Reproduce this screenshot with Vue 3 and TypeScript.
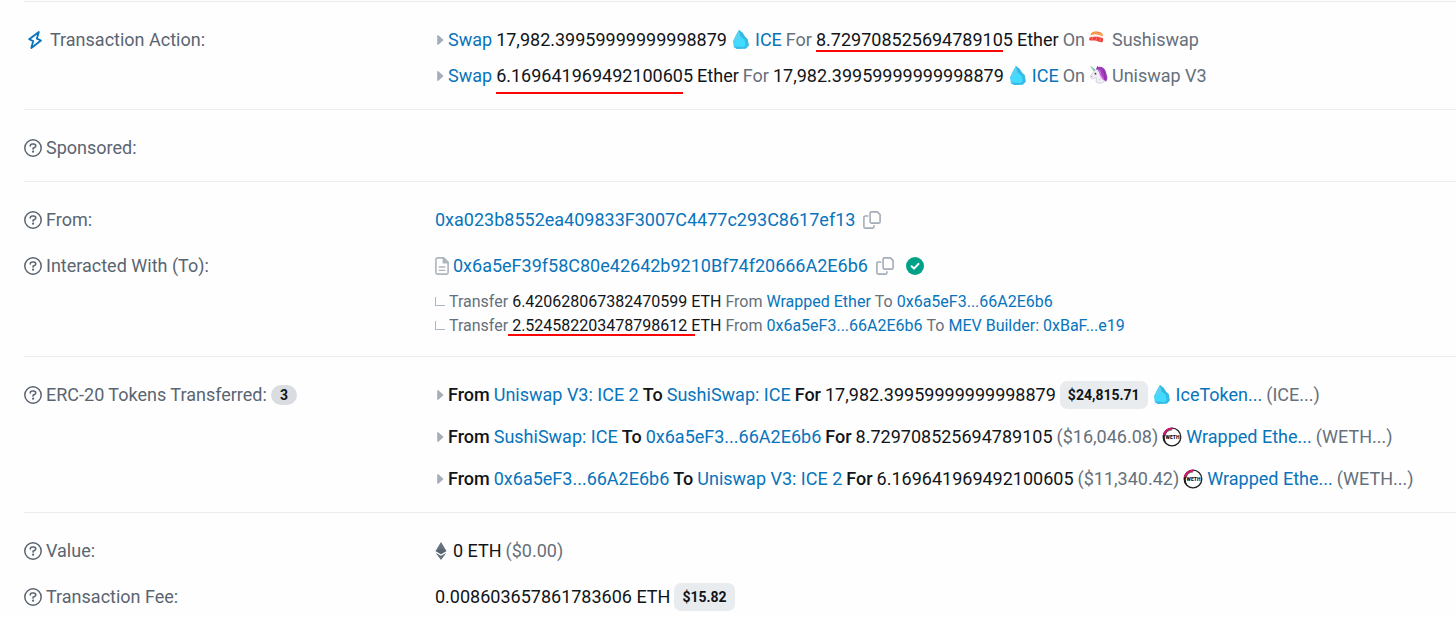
<script setup lang="ts">
interface TokenTransfer {
  from: string
  to: string
  amount: string
  fiat: string
  pill: boolean
  icon: 'ice' | 'weth'
  token: string
  symbol: string
}
interface InternalTransfer {
  amount: string
  from: string
  to: string
  marked: boolean
}

const fromAddress = '0xa023b8552ea409833F3007C4477c293C8617ef13'
const toAddress = '0x6a5eF39f58C80e42642b9210Bf74f20666A2E6b6'

const internalTransfers: InternalTransfer[] = [
  { amount: '6.420628067382470599', from: 'Wrapped Ether', to: '0x6a5eF3...66A2E6b6', marked: false },
  { amount: '2.524582203478798612', from: '0x6a5eF3...66A2E6b6', to: 'MEV Builder: 0xBaF...e19', marked: true },
]

const tokenTransfers: TokenTransfer[] = [
  {
    from: 'Uniswap V3: ICE 2', to: 'SushiSwap: ICE',
    amount: '17,982.39959999999998879', fiat: '$24,815.71', pill: true,
    icon: 'ice', token: 'IceToken...', symbol: '(ICE...)',
  },
  {
    from: 'SushiSwap: ICE', to: '0x6a5eF3...66A2E6b6',
    amount: '8.729708525694789105', fiat: '($16,046.08)', pill: false,
    icon: 'weth', token: 'Wrapped Ethe...', symbol: '(WETH...)',
  },
  {
    from: '0x6a5eF3...66A2E6b6', to: 'Uniswap V3: ICE 2',
    amount: '6.169641969492100605', fiat: '($11,340.42)', pill: false,
    icon: 'weth', token: 'Wrapped Ethe...', symbol: '(WETH...)',
  },
]

function copy(text: string) {
  navigator.clipboard?.writeText(text)
}
</script>

<template>
  <svg class="sprites" aria-hidden="true">
    <symbol id="i-help" viewBox="0 0 18 18">
      <circle cx="9" cy="9" r="8.2" fill="none" stroke="currentColor" stroke-width="1.5" />
      <path d="M6.300 7V6.800C6.300 5.700 7.200 5 8.200 5h1.500c1.200 0 2 .8 2 1.900 0 .7-.4 1.200-1 1.500L9.100 9.300v.8" fill="none" stroke="currentColor" stroke-width="1.600" stroke-linecap="round" stroke-linejoin="round" />
      <circle cx="9.100" cy="12.700" r="1.100" fill="currentColor" />
    </symbol>
    <symbol id="i-bolt" viewBox="0 0 14 18">
      <path d="M10.800 1 1.200 8.200l4 1.900-1.900 6.900L13 9.500l-4.100-1.900z" fill="none" stroke="currentColor" stroke-width="1.800" stroke-linejoin="round" />
    </symbol>
    <symbol id="i-caret" viewBox="0 0 7 10">
      <path d="M.2.800v8.400c0 .7.600.9 1.100.5l4.800-4.100c.4-.3.4-.9 0-1.200L1.300.300C.8-.1.200.100.200.800z" fill="currentColor" />
    </symbol>
    <symbol id="i-copy" viewBox="0 0 18 18">
      <path d="M8.400.9h6l2.700 2.700v7.200c0 .8-.5 1.300-1.300 1.300H8.400c-.8 0-1.300-.5-1.300-1.300V2.200C7.100 1.400 7.600.9 8.400.9zM4.800 5H2.200C1.400 5 .9 5.500.9 6.300v9.500c0 .8.500 1.300 1.300 1.300h7.400c.8 0 1.300-.5 1.300-1.300v-1" fill="none" stroke="currentColor" stroke-width="1.600" stroke-linecap="round" stroke-linejoin="round" />
    </symbol>
    <symbol id="i-doc" viewBox="0 0 14 18">
      <path d="M2.400.9h6.200l4.500 4.500v10.200c0 .9-.6 1.500-1.500 1.500H2.400c-.9 0-1.500-.6-1.500-1.500V2.400C.9 1.500 1.500.9 2.400.9z" fill="none" stroke="currentColor" stroke-width="1.600" stroke-linejoin="round" />
      <path d="M8.300.9v4.800h4.800zM4.300 10h5.500M4.300 13.400h5.500" fill="currentColor" stroke="currentColor" stroke-width="1.400" stroke-linecap="round" />
    </symbol>
    <symbol id="i-check" viewBox="0 0 18 18">
      <circle cx="9" cy="9" r="9" fill="#00a186" />
      <path d="m5.600 9.300 2.400 2.300 4.500-4.700" fill="none" stroke="#fff" stroke-width="2" stroke-linecap="round" stroke-linejoin="round" />
    </symbol>
    <symbol id="i-eth" viewBox="0 0 12 18">
      <path d="M6 0 .5 9 6 12.200 11.500 9z" fill="#66717e" />
      <path d="M.5 10.700 6 18l5.500-7.300L6 13.800z" fill="#66717e" />
      <path d="M.5 9 6 6.600 11.500 9 6 12.200z" fill="#4b5664" opacity=".5" />
    </symbol>
    <symbol id="i-ice" viewBox="0 0 16 19">
      <path d="M5.800 0 9.500 2.700 12 6.700l2.700 2.500 1 6.300-2.700 3L4 19 .8 17 0 11.500l2.300-5z" fill="#49d3fa" />
      <path d="M5.800 0 2.300 6.500 0 11.500 5.500 9.500 7.500 6.500z" fill="#5bd2f4" />
      <path d="M5.800 0 9.500 2.700 12 6.700l2.700 2.500-3 .8-4.200-3.500z" fill="#35b9df" />
      <path d="m7.500 6.500 4.200 3.500 1 5.500-2.200 1.500-8-.5-.7-4.300 3.700-2.700z" fill="#41dbff" />
      <path d="m14.700 9.200 1 6.300-2.700 3L4 19 .8 17l1.700-.5 8 .5 2.200-1.500-1-5.500z" fill="#37bde5" />
    </symbol>
    <symbol id="i-sushi" viewBox="0 0 16 12">
      <path d="M1.500 4C2.300 1.500 4 .5 7 .2c3.500-.3 6.300.8 7.800 3.300l-.3 1.800C11 3 5.500 2.500 1.500 4z" fill="#f47b20" />
      <path d="M4 2.200C7 1.300 11 1.600 14 3.600" fill="none" stroke="#fcc48e" stroke-width=".9" />
      <path d="M.8 5.300C5.500 3.400 11 4 14.800 6.300l-.2 1.200C11 5.600 5 5 .6 6.600z" fill="#fbe4df" />
      <path d="M.5 6.600C5 5 11.500 5.500 15.200 7.700l-.7 3.900c-3.300.4-5.500-1.800-8.500-1.900-2.200 0-3.800.4-5.900-.4z" fill="#f2413c" />
      <path d="M3.800 6.300 3.300 9M8.200 6.400l-.6 2.800M12.300 7.500l-.8 3" stroke="#f98b82" stroke-width=".8" />
    </symbol>
    <symbol id="i-unicorn" viewBox="0 0 19 19">
      <path d="M7.500 3.500C9.500.8 14 1.300 16 4.700c1.400 2.500 1.300 4.600 2.300 6.800.3 2-.2 3.900-1.200 5l-3.600-2.300-4-6.700z" fill="#a23cc0" />
      <path d="M12.500 3.300c2.600 1.700 3 4.500 3.300 7.200.2 1.700.7 3 .3 4.700" fill="none" stroke="#7a2e96" stroke-width=".9" />
      <path d="M6 5.200C8 3.900 10.800 4.800 11.600 7.500c.7 2.400.9 4.100 2.200 5.900l1.700 3.100c-2.500 2.200-6 2.300-8.500.3l.5-4-2.800.5c-.8 1-2.500.8-3-.5L1.400 11l3-4z" fill="#f1eef4" stroke="#b8aec4" stroke-width=".5" />
      <path d="M10 15c1.200-.2 2.100-1.200 2.300-2.700" fill="none" stroke="#c9bdd4" stroke-width=".7" />
      <path d="M1.100.800 6.200 4.600 4.900 6.200z" fill="#3fb9c9" />
      <path d="m1.100.800 2.100 1.500-.5.700z" fill="#f2b33a" />
      <path d="m3.900 2.900 1.300.9-1 1.300-.8-1.100z" fill="#e3c44c" />
      <path d="M8.700.500 9.700 4 7 4.600z" fill="#7d3b8e" />
      <path d="M9.500 5.500c1.900 1.300 1.600 3.600 2.500 5.200.8 1.300 2.200 1.800 2.300 3.400" fill="none" stroke="#c95bdd" stroke-width="1.500" stroke-linecap="round" />
      <circle cx="6.500" cy="8.700" r=".9" fill="#352b3e" />
      <circle cx="2.700" cy="11.500" r=".5" fill="#88718f" />
    </symbol>
  </svg>

  <main class="details">
    <section class="section">
      <div class="row">
        <div class="label label-action">
          <svg class="bolt"><use href="#i-bolt" /></svg>
          <span>Transaction Action:</span>
        </div>
        <ul class="lines actions">
          <li class="line">
            <svg class="caret"><use href="#i-caret" /></svg>
            <a href="#">Swap</a>
            <span>17,982.39959999999998879</span>
            <svg class="ice"><use href="#i-ice" /></svg>
            <a href="#">ICE</a>
            <span class="muted">For</span>
            <span class="marked near">8.729708525694789105</span>
            <span>Ether</span>
            <span class="muted">On</span>
            <svg class="dex"><use href="#i-sushi" width="15" height="12" y="2" /></svg>
            <span class="muted">Sushiswap</span>
          </li>
          <li class="line">
            <svg class="caret"><use href="#i-caret" /></svg>
            <a href="#">Swap</a>
            <span class="marked">6.169641969492100605</span>
            <span>Ether</span>
            <span class="muted">For</span>
            <span>17,982.39959999999998879</span>
            <svg class="ice"><use href="#i-ice" /></svg>
            <a href="#">ICE</a>
            <span class="muted">On</span>
            <svg class="dex"><use href="#i-unicorn" /></svg>
            <span class="muted">Uniswap V3</span>
          </li>
        </ul>
      </div>
    </section>

    <section class="section">
      <div class="row">
        <div class="label"><svg class="help"><use href="#i-help" /></svg><span>Sponsored:</span></div>
      </div>
    </section>

    <section class="section parties">
      <div class="row">
        <div class="label"><svg class="help"><use href="#i-help" /></svg><span>From:</span></div>
        <div class="line">
          <a href="#">{{ fromAddress }}</a>
          <button type="button" class="copy" aria-label="Copy address" @click="copy(fromAddress)">
            <svg><use href="#i-copy" /></svg>
          </button>
        </div>
      </div>
      <div class="row">
        <div class="label"><svg class="help"><use href="#i-help" /></svg><span>Interacted With (To):</span></div>
        <div>
          <div class="line">
            <svg class="doc"><use href="#i-doc" /></svg>
            <a href="#">{{ toAddress }}</a>
            <button type="button" class="copy" aria-label="Copy address" @click="copy(toAddress)">
              <svg><use href="#i-copy" /></svg>
            </button>
            <svg class="check"><use href="#i-check" /></svg>
          </div>
          <ul class="internal">
            <li v-for="t in internalTransfers" :key="t.amount" class="line small">
              <span class="elbow"></span>
              <span class="muted">Transfer</span>
              <span :class="{ marked: t.marked, tight: t.marked }">{{ t.amount }} ETH</span>
              <span class="muted">From</span>
              <a href="#">{{ t.from }}</a>
              <span class="muted">To</span>
              <a href="#">{{ t.to }}</a>
            </li>
          </ul>
        </div>
      </div>
    </section>

    <section class="section">
      <div class="row">
        <div class="label">
          <svg class="help"><use href="#i-help" /></svg>
          <span>ERC-20 Tokens Transferred:</span>
          <span class="count">3</span>
        </div>
        <ul class="lines tokens">
          <li v-for="t in tokenTransfers" :key="t.amount" class="line">
            <svg class="caret"><use href="#i-caret" /></svg>
            <b>From</b>
            <a href="#">{{ t.from }}</a>
            <b>To</b>
            <a href="#">{{ t.to }}</a>
            <b>For</b>
            <span>{{ t.amount }}</span>
            <span :class="t.pill ? 'pill' : 'muted'">{{ t.fiat }}</span>
            <svg v-if="t.icon === 'ice'" class="ice"><use href="#i-ice" /></svg>
            <svg v-else class="weth" viewBox="0 0 20 20">
              <circle cx="10" cy="10" r="8.800" fill="#fff" stroke="#222" stroke-width="1.300" />
              <path d="M1.700 9A8.500 8.500 0 0 1 10.500 1.500" fill="none" stroke="#d4146a" stroke-width="2.200" />
              <path d="M.9 8.500C.6 12.500 2.500 16 5.500 17.700 3.200 15 2.300 12 3 8z" fill="#1b1b1b" />
              <path d="M3.200 8.500A7.300 7.300 0 0 1 10 2.900" fill="none" stroke="#222" stroke-width=".8" />
              <text x="10.500" y="12" text-anchor="middle" class="weth-name">WETH</text>
            </svg>
            <a href="#">{{ t.token }}</a>
            <span class="muted symbol">{{ t.symbol }}</span>
          </li>
        </ul>
      </div>
    </section>

    <section class="section">
      <div class="row">
        <div class="label"><svg class="help"><use href="#i-help" /></svg><span>Value:</span></div>
        <div class="line">
          <svg class="eth"><use href="#i-eth" /></svg>
          <span>0 ETH</span>
          <span class="muted">($0.00)</span>
        </div>
      </div>
      <div class="row">
        <div class="label"><svg class="help"><use href="#i-help" /></svg><span>Transaction Fee:</span></div>
        <div class="line">
          <span>0.008603657861783606 ETH</span>
          <span class="pill">$15.82</span>
        </div>
      </div>
    </section>
  </main>
</template>

<style>
body {
  background: #fefefe;
}
</style>

<style scoped>
.sprites {
  position: absolute;
  width: 0;
  height: 0;
}
.details {
  padding: 1px 0 0 24px;
  overflow: hidden;
  font-family: Roboto, "Liberation Sans", sans-serif;
  font-size: 18px;
  line-height: 24px;
  color: #111418;
}
.section {
  display: flex;
  flex-direction: column;
  gap: 22px;
  padding: 26px 0 21px;
  border-top: 1px solid #e9ecef;
}
.parties {
  padding-bottom: 18px;
}
.row {
  display: grid;
  grid-template-columns: 411px 1fr;
}
.label {
  display: flex;
  align-items: center;
  align-self: start;
  gap: 4px;
  height: 24px;
  color: #5a6571;
  white-space: nowrap;
}
.label-action {
  gap: 8px;
  padding-left: 4px;
}
ul {
  margin: 0;
  padding: 0;
  list-style: none;
}
.lines {
  display: flex;
  flex-direction: column;
}
.actions {
  gap: 12px;
}
.tokens {
  gap: 18px;
}
.line {
  display: flex;
  align-items: center;
  gap: 4px;
  height: 24px;
  white-space: nowrap;
}
.small {
  gap: 4px;
  font-size: 16px;
}
.internal {
  margin-top: 12px;
}
a {
  color: #0774bc;
  text-decoration: none;
}
b {
  font-weight: 500;
}
svg {
  display: block;
  flex: none;
}
.muted {
  color: #66707b;
}
.help {
  width: 18px;
  height: 18px;
}
.bolt {
  width: 14px;
  height: 18px;
  color: #0774bc;
}
.caret {
  width: 7px;
  height: 10px;
  margin-left: 2px;
  color: #a5adb8;
}
.ice {
  width: 16px;
  height: 19px;
  margin: 0 2px 2px;
}
.dex {
  width: 19px;
  height: 19px;
  margin-bottom: 3px;
}
.weth {
  width: 20px;
  height: 20px;
}
.weth-name {
  fill: #111;
  font-size: 5px;
  font-weight: 900;
}
.doc {
  width: 14px;
  height: 18px;
  color: #adb5bd;
}
.check {
  width: 18px;
  height: 18px;
  margin-left: 8px;
}
.eth {
  width: 12px;
  height: 18px;
  margin-right: 2px;
}
.copy {
  margin: 0 0 0 4px;
  padding: 0;
  border: 0;
  background: none;
  color: #a5adb8;
  cursor: pointer;
}
.copy svg {
  width: 18px;
  height: 18px;
}
.elbow {
  width: 10px;
  height: 9px;
  box-sizing: border-box;
  margin-bottom: 2px;
  border-left: 1px solid #adb5c8;
  border-bottom: 1px solid #adb5c8;
}
.marked {
  position: relative;
}
.marked::after {
  content: "";
  position: absolute;
  left: 0;
  bottom: -6px;
  width: 187px;
  height: 2px;
  background: #fb0505;
}
.near::after {
  bottom: 0;
}
.tight::after {
  left: -4px;
  bottom: 2px;
}
.count {
  padding: 0 9px;
  border-radius: 10px;
  background: #d9dce0;
  color: #111418;
  font-size: 14px;
  font-weight: 700;
  line-height: 20px;
}
.pill {
  padding: 0 8px;
  border-radius: 7px;
  background: #e9ecef;
  font-size: 14px;
  font-weight: 700;
  line-height: 28px;
}
</style>
